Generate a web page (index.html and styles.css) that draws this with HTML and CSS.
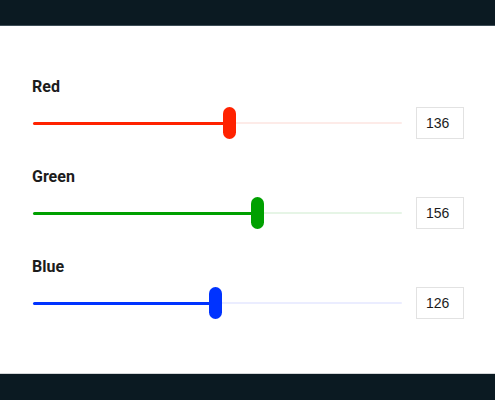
FILE: index.html
```html
<!DOCTYPE html>
<html>
<head>
<meta charset="utf-8">
<link rel="stylesheet" href="styles.css">
</head>
<body>
<header class="bar bar-top"></header>
<main class="panel">
  <section class="row row-red">
    <div class="label">Red</div>
    <div class="control">
      <div class="slider" style="--p:0.5333">
        <div class="track"></div>
        <div class="fill"></div>
        <div class="thumb"></div>
      </div>
      <div class="value">136</div>
    </div>
  </section>
  <section class="row row-green">
    <div class="label">Green</div>
    <div class="control">
      <div class="slider" style="--p:0.6118">
        <div class="track"></div>
        <div class="fill"></div>
        <div class="thumb"></div>
      </div>
      <div class="value">156</div>
    </div>
  </section>
  <section class="row row-blue">
    <div class="label">Blue</div>
    <div class="control">
      <div class="slider" style="--p:0.4941">
        <div class="track"></div>
        <div class="fill"></div>
        <div class="thumb"></div>
      </div>
      <div class="value">126</div>
    </div>
  </section>
</main>
<footer class="bar bar-bottom"></footer>
</body>
</html>
```
FILE: styles.css
```css
html, body {
  margin: 0;
  padding: 0;
}
body {
  width: 495px;
  height: 400px;
  display: flex;
  flex-direction: column;
  background: #ffffff;
  font-family: Roboto, "Liberation Sans", sans-serif;
  color: #1c1c1c;
  overflow: hidden;
}
.bar {
  background: #0b1a22;
  flex: none;
}
.bar-top {
  height: 25px;
  border-bottom: 1px solid #3e4e57;
}
.bar-bottom {
  height: 26px;
  border-top: 1px solid #d4d6d8;
}
.panel {
  flex: 1;
  padding: 51px 31px 0 33px;
  display: flex;
  flex-direction: column;
  gap: 28px;
}
.row {
  display: flex;
  flex-direction: column;
  gap: 11px;
}
.label {
  font-weight: 700;
  font-size: 16px;
  line-height: 19px;
  margin-left: -1px;
}
.control {
  display: flex;
  align-items: center;
  gap: 14px;
  height: 32px;
}
.slider {
  position: relative;
  flex: 1;
  height: 32px;
}
.track, .fill {
  position: absolute;
  left: 0;
  top: 14.5px;
  height: 3px;
  border-radius: 1.5px;
}
.track {
  right: 0;
  height: 2px;
  top: 15px;
}
.fill {
  width: calc(6.5px + (100% - 13px) * var(--p));
}
.thumb {
  position: absolute;
  top: 0;
  left: calc((100% - 13px) * var(--p));
  width: 13px;
  height: 32px;
  border-radius: 6.5px;
}
.row-red .track { background: #fdebe8; }
.row-red .fill, .row-red .thumb { background: #ff2200; }
.row-green .track { background: #e6f5e6; }
.row-green .fill, .row-green .thumb { background: #00a000; }
.row-blue .track { background: #ebedff; }
.row-blue .fill, .row-blue .thumb { background: #0033ff; }
.value {
  box-sizing: border-box;
  width: 48px;
  height: 32px;
  border: 1px solid #e2e2e2;
  font-family: "Liberation Sans", Arial, sans-serif;
  font-size: 14px;
  line-height: 30px;
  padding-left: 9px;
  color: #1c1c1c;
}
```
